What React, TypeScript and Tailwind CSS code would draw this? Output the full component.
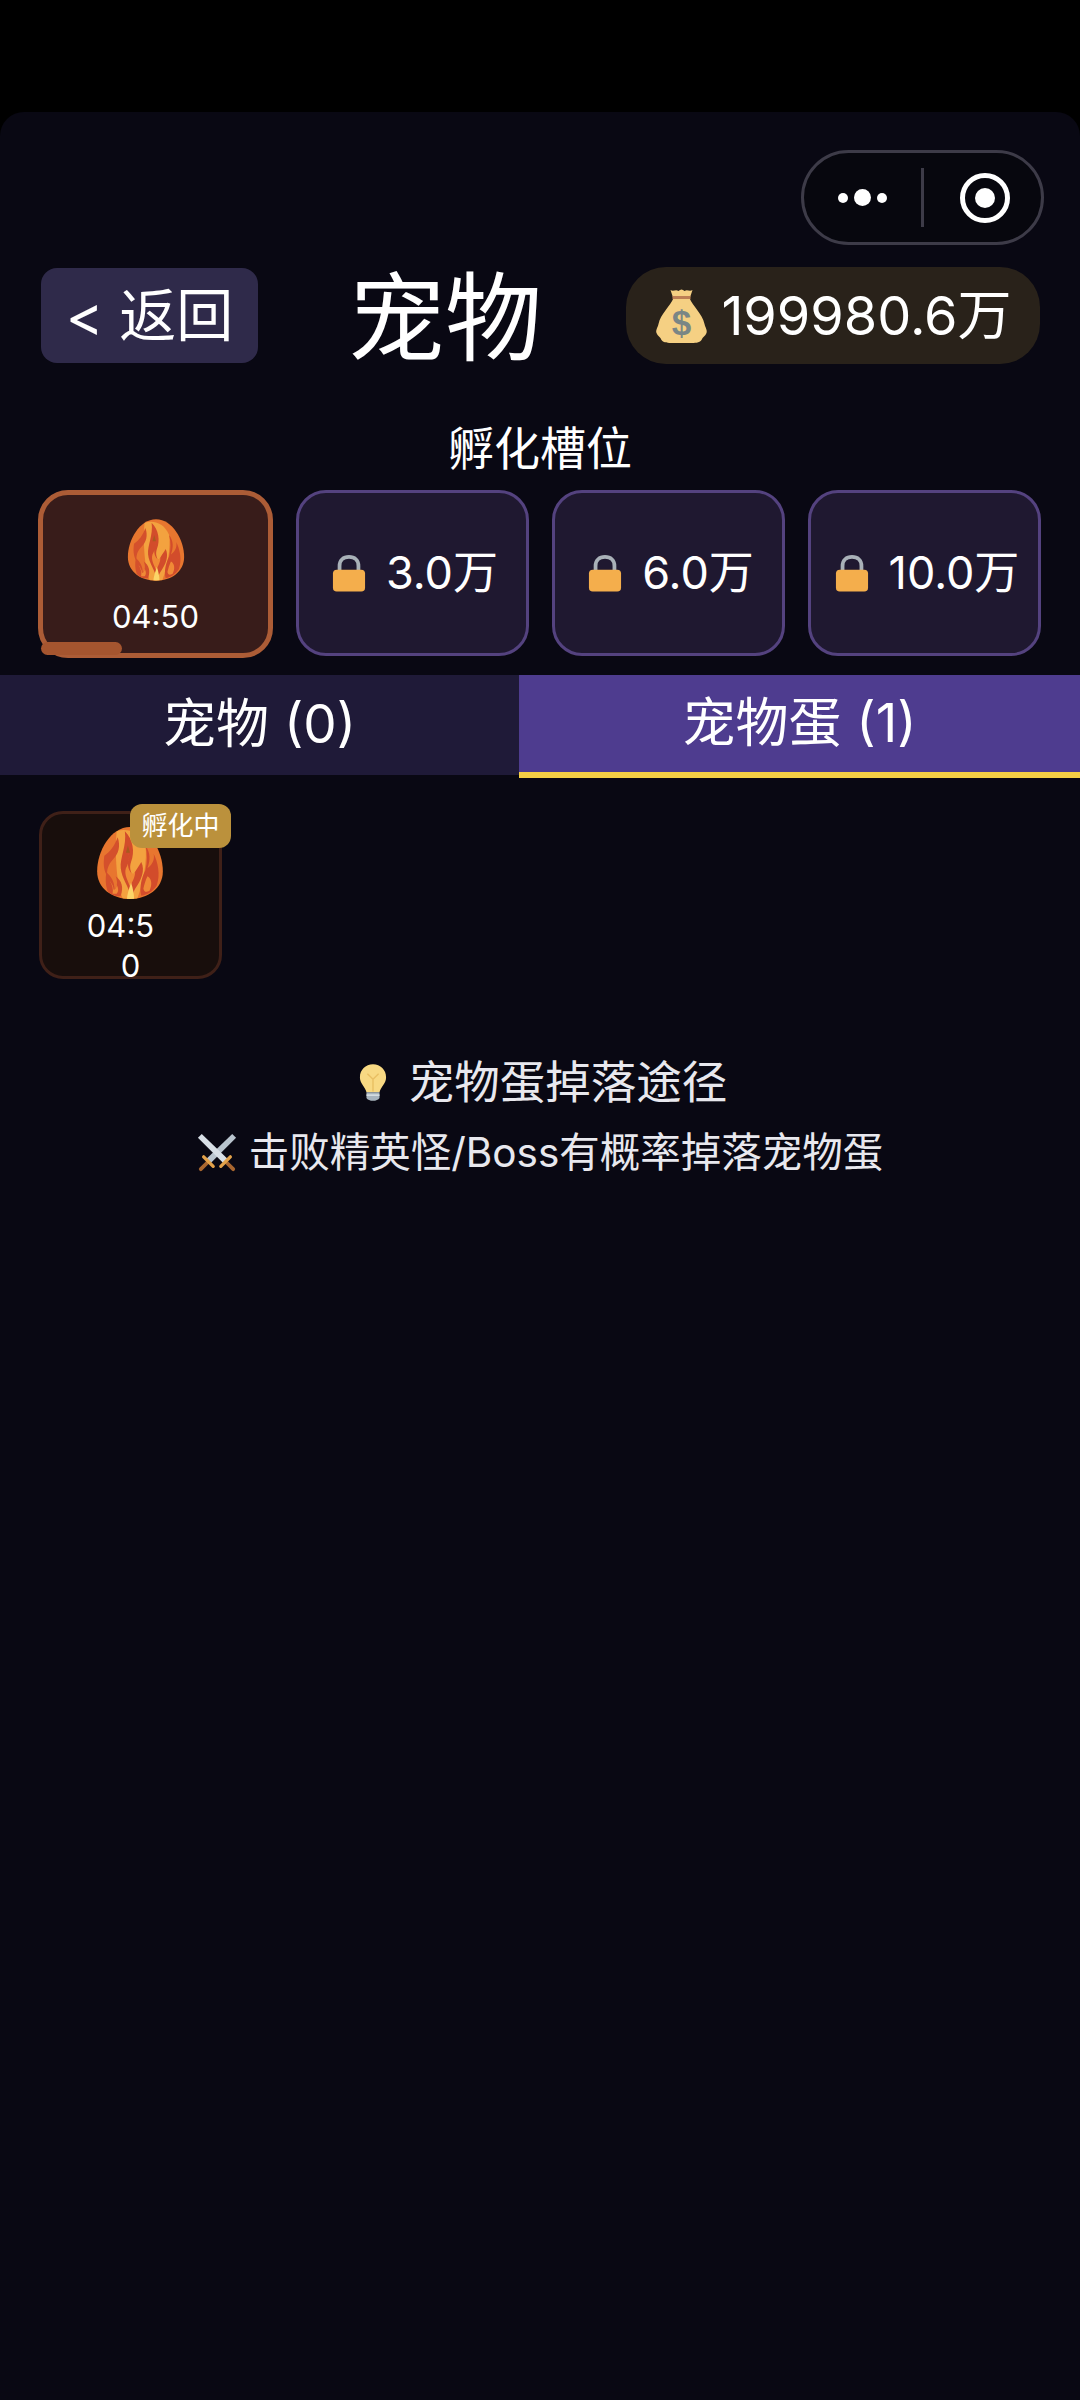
import React from 'react';

const lockedSlots = ['3.0万', '6.0万', '10.0万'];

const FONT = "font-['Inter','Noto_Sans_CJK_SC',sans-serif]";

function FireEgg({ className, id }: { className: string; id: string }) {
  const shell = 'M33 2C52 2 65 26 65 45C65 62 50 72 33 72C16 72 1 62 1 45C1 26 14 2 33 2Z';
  return (
    <svg viewBox="0 0 66 74" className={className}>
      <defs>
        <clipPath id={id}>
          <path d={shell} />
        </clipPath>
      </defs>
      <path d={shell} fill="#e8762f" />
      <g clipPath={`url(#${id})`}>
        <path d="M20 6C30 3 42 6 48 20C50 34 46 56 40 72H26C20 58 18 30 20 6Z" fill="#f3a23f" />
        {/* flames, red edge with an orange belly */}
        <path d="M8 30C14 26 18 20 21 12C24 21 22 28 16 34C12 38 10 44 11 50C7 44 7 37 8 30Z" fill="#d4502c" />
        <path d="M28 6C36 14 38 26 34 36C32 42 34 46 36 50C38 44 42 40 44 36C48 44 44 54 38 62C36 66 35 68 34 70C32 60 25 52 24 42C23 32 30 20 28 6Z" fill="#d24c2b" />
        <path d="M30 22C33 28 33 36 29 42C27 48 31 54 33 60C36 54 38 50 38 46C35 50 31 44 31 38C33 32 32 26 30 22Z" fill="#f08a36" />
        <path d="M10 46C15 50 18 56 18 63C21 60 21 54 19 50C25 54 27 61 24 69C20 70 14 68 11 64C9 58 9 52 10 46Z" fill="#d4502c" />
        <path d="M13 54C16 58 17 63 16 67H20C22 65 22 62 20 58C20 62 18 63 17 63C17 60 15 56 13 54Z" fill="#f08a36" />
        <path d="M48 20C53 27 53 34 50 42C56 38 57 32 56 28C60 36 63 48 59 59C55 65 50 68 44 69C42 61 44 52 48 44C50 36 50 28 48 20Z" fill="#d24c2b" />
        <path d="M50 50C54 52 55 58 52 64C48 66 47 65 46 62C47 58 48 54 50 50Z" fill="#f08a36" />
        <path d="M31 20L33 27L29 27Z" fill="#a85a1e" />
        <path d="M30 72C31 64 33 60 34 56C36 62 37 68 37 72Z" fill="#fbd568" />
      </g>
    </svg>
  );
}

function LockIcon() {
  return (
    <svg viewBox="0 0 36 40" className="w-[34px] h-[39px] shrink-0">
      <path d="M8 20V12C8 6 12 2.500 18 2.500C24 2.500 28 6 28 12V20" fill="none" stroke="#a9b1b8" strokeWidth="4" />
      <rect x="1" y="16" width="34" height="23" rx="4" fill="#f4ae4c" />
    </svg>
  );
}

function MoneyBag() {
  return (
    <svg viewBox="0 0 54 56" className="w-[55px] h-[56px] shrink-0">
      <path d="M16 2C19 4 21 1 24 3C26 1 28 1 30 3C33 1 35 4 38 2L35 11H19Z" fill="#f5d083" />
      <path d="M19 10C16 18 6 26 4 36C3 40 1 42 2 45C3 48 6 49 7 52C9 55 14 55 18 55H36C40 55 45 55 47 52C48 49 51 48 52 45C53 42 51 40 50 36C48 26 38 18 35 10Z" fill="#f5d083" />
      <rect x="18" y="8" width="18" height="3" fill="#bd7f55" />
      <text x="27" y="47" textAnchor="middle" fontSize="35" fill="#7a8685" fontFamily="Liberation Sans, sans-serif" fontWeight="700">$</text>
    </svg>
  );
}

function BulbIcon() {
  return (
    <svg viewBox="0 0 30 42" className="w-[28px] h-[40px] shrink-0">
      <path d="M15 1C23 1 29 7 29 15C29 22 23 25 22 31H8C7 25 1 22 1 15C1 7 7 1 15 1Z" fill="#f8d983" />
      <path d="M9 11L15 17L21 11M15 17V30" fill="none" stroke="#e9bf63" strokeWidth="1.500" />
      <path d="M8 31H22V37C20 41 10 41 8 37Z" fill="#a7b3bd" />
      <path d="M8 34H22" stroke="#dfe6ea" strokeWidth="1.500" />
    </svg>
  );
}

function SwordsIcon() {
  return (
    <svg viewBox="0 0 42 42" className="w-[40px] h-[40px] shrink-0">
      <path d="M41 5L37 1L10 27L14 32Z" fill="#b9c4ce" />
      <path d="M1 5L5 1L32 27L28 32Z" fill="#d8dfe6" />
      <path d="M11 31L4 38M31 31L38 38" stroke="#a8662f" strokeWidth="4" strokeLinecap="round" />
      <path d="M7 25L17 35M35 25L25 35" stroke="#e3a24a" strokeWidth="3.500" strokeLinecap="round" />
    </svg>
  );
}

export default function App() {
  return (
    <div className={`${FONT} w-[1080px] min-h-[2400px] bg-black pt-[112px] flex flex-col text-white`}>
      <div className="flex-1 flex flex-col bg-[#090813] rounded-t-[24px]">
        {/* Capsule */}
        <div className="flex justify-end pt-[38px] pr-[36px]">
          <div className="w-[243px] h-[95px] rounded-full border-[3px] border-[#3d3b48] bg-[#07070e] flex items-center">
            <div className="w-[83px] flex items-center justify-end gap-[6px]">
              <span className="w-[10px] h-[10px] rounded-full bg-white" />
              <span className="w-[17px] h-[17px] rounded-full bg-white" />
              <span className="w-[10px] h-[10px] rounded-full bg-white" />
            </div>
            <div className="ml-[34px] w-[3px] h-[59px] bg-[#3d3b48]" />
            <div className="ml-[36px] w-[50px] h-[50px] rounded-full border-[5px] border-white flex items-center justify-center">
              <span className="w-[20px] h-[20px] rounded-full bg-white" />
            </div>
          </div>
        </div>

        {/* Header */}
        <div className="mt-[22px] pl-[41px] pr-[40px] flex items-center justify-between h-[97px]">
          <button className="w-[217px] h-[95px] rounded-[16px] bg-[#2f2a4a] text-[57px] leading-none flex items-center justify-center">
            &lt; 返回
          </button>
          <div className="text-[97px] leading-none font-normal ml-[6px] pt-[3px]">宠物</div>
          <div className="w-[414px] h-[97px] rounded-[40px] bg-[#29221a] flex items-center justify-center gap-[12px] text-[54px] leading-none">
            <MoneyBag />
            <span>199980.6万</span>
          </div>
        </div>

        {/* Slots */}
        <div className="mt-[54px] text-center text-[46px] leading-[60px]">孵化槽位</div>
        <div className="mt-[12px] pl-[38px] pr-[39px] grid grid-cols-[235px_1fr_1fr_1fr] gap-[23px]">
          <div className="relative h-[168px] rounded-[30px] border-[5px] border-[#ac5c36] bg-[#381c1a] flex flex-col items-center">
            <FireEgg id="slot-egg" className="w-[58px] h-[66px] mt-[22px] shrink-0" />
            <span className="mt-[16px] text-[31px] leading-[36px]">04:50</span>
            <span className="absolute left-[-2px] bottom-[-2px] w-[81px] h-[13px] rounded-full bg-[#a5552f]" />
          </div>
          {lockedSlots.map((label) => (
            <div key={label} className="h-[166px] pl-[5px] rounded-[30px] border-[3px] border-[#54427f] bg-[#1f1830] flex items-center justify-center gap-[20px] text-[45px]">
              <LockIcon />
              <span>{label}</span>
            </div>
          ))}
        </div>

        {/* Tabs */}
        <div className="mt-[17px] grid grid-cols-[519px_1fr] items-start text-[53px]">
          <div className="h-[100px] bg-[#1f1a38] flex items-center justify-center">宠物 (0)</div>
          <div className="h-[103px] bg-[#4e3c8f] border-b-[6px] border-[#f5cf45] flex items-center justify-center">宠物蛋 (1)</div>
        </div>

        {/* Egg list */}
        <div className="pt-[33px] px-[39px]">
          <div className="relative w-[183px] h-[168px] rounded-[24px] border-[3px] border-[#3f2018] bg-[#180e0c] flex flex-col items-center">
            <FireEgg id="list-egg" className="w-[68px] h-[76px] mt-[11px] ml-[-2px] shrink-0" />
            <span className="mt-[5px] mr-[20px] text-[31px] leading-[40px]">04:5</span>
            <span className="text-[31px] leading-[40px]">0</span>
            <span className="absolute left-[88px] top-[-10px] w-[101px] h-[44px] rounded-[12px] bg-[#bb913c] flex items-center justify-center text-[26px] leading-none">
              孵化中
            </span>
          </div>
        </div>

        {/* Drop hint */}
        <div className="mt-[74px] pl-[6px] flex items-center justify-center gap-[22px] text-[45.500px] leading-[60px] text-[#e8e8ee]">
          <BulbIcon />
          <span>宠物蛋掉落途径</span>
        </div>
        <div className="mt-[11px] flex items-center justify-center gap-[12px] text-[40.500px] leading-[58px] text-[#e8e8ee]">
          <SwordsIcon />
          <span>击败精英怪/Boss有概率掉落宠物蛋</span>
        </div>
      </div>
    </div>
  );
}
